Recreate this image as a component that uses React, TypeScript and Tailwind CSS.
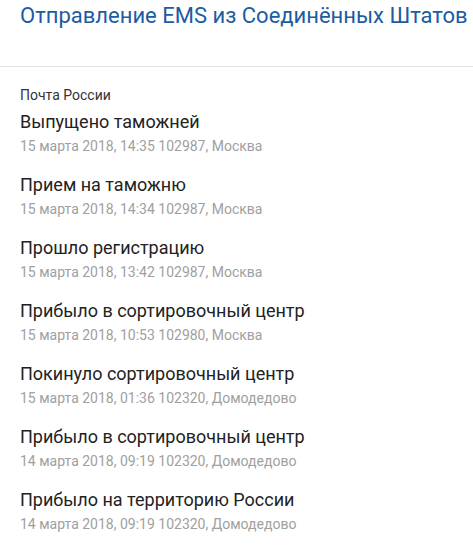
import React from "react";

const items = [
  ["Выпущено таможней", "15 марта 2018, 14:35 102987, Москва"],
  ["Прием на таможню", "15 марта 2018, 14:34 102987, Москва"],
  ["Прошло регистрацию", "15 марта 2018, 13:42 102987, Москва"],
  ["Прибыло в сортировочный центр", "15 марта 2018, 10:53 102980, Москва"],
  ["Покинуло сортировочный центр", "15 марта 2018, 01:36 102320, Домодедово"],
  ["Прибыло в сортировочный центр", "14 марта 2018, 09:19 102320, Домодедово"],
  ["Прибыло на территорию России", "14 марта 2018, 09:19 102320, Домодедово"],
];

export default function App() {
  return (
    <div className="w-[473px] h-[549px] overflow-hidden bg-white" style={{ fontFamily: "Roboto, sans-serif" }}>
      <div className="pl-[20px] pt-[2px] h-[67px] border-b border-[#e3e3e3]">
        <h1 className="text-[22px] leading-[28px] text-[#1b5ca2] whitespace-nowrap">Отправление EMS из Соединённых Штатов</h1>
      </div>
      <div className="pl-[20px] pt-[18px]">
        <div className="text-[14px] leading-[20px] text-[#333]">Почта России</div>
        <div className="flex flex-col gap-[15px] mt-[5px]">
          {items.map(([t, s], i) => (
            <div key={i}>
              <div className="text-[18px] leading-[24px] text-[#222]">{t}</div>
              <div className="text-[14px] leading-[24px] text-[#a0a0a0]">{s}</div>
            </div>
          ))}
        </div>
      </div>
    </div>
  );
}
